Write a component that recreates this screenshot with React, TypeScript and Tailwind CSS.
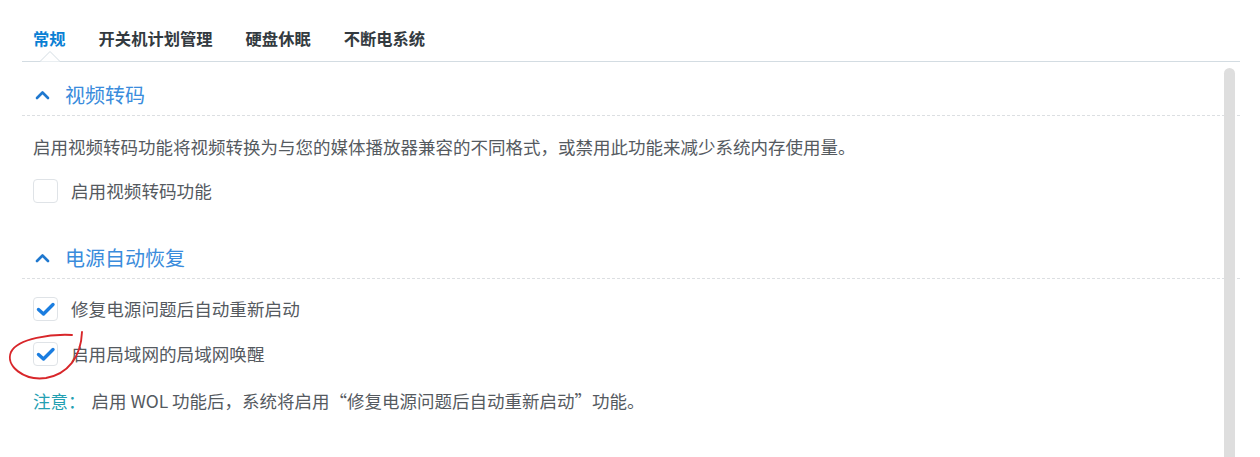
import React from "react";

const FONT = { fontFamily: '"Noto Sans CJK SC", "Noto Sans", sans-serif' };

function Chevron() {
  return (
    <svg width="15" height="10" viewBox="0 0 15 10" className="shrink-0">
      <path d="M2 8 L7.5 2.5 L13 8" fill="none" stroke="#1f78cf" strokeWidth="2.6" strokeLinecap="round" strokeLinejoin="round" />
    </svg>
  );
}

function Checkbox({ checked }: { checked?: boolean }) {
  return (
    <div className="w-[25px] h-[24px] rounded-[4px] border-[1.5px] border-[#dfe3e7] bg-white flex items-center justify-center shrink-0">
      {checked && (
        <svg width="22" height="22" viewBox="0 0 22 22">
          <path d="M3.5 11.5 L8.5 16 L18 6.5" fill="none" stroke="#1a7de0" strokeWidth="3.4" strokeLinecap="round" strokeLinejoin="round" />
        </svg>
      )}
    </div>
  );
}

function SectionHeader({ title }: { title: string }) {
  return (
    <div className="flex items-center h-[28px] box-content pb-[6px] border-b border-dashed border-[#dcdfe2]">
      <div className="w-[43px] pl-[13px] flex items-center">
        <Chevron />
      </div>
      <span className="text-[20px] leading-[28px] text-[#3a8cdc]">{title}</span>
    </div>
  );
}

function CheckRow({ label, checked }: { label: string; checked?: boolean }) {
  return (
    <div className="flex items-center h-[24px] pl-[11px]">
      <Checkbox checked={checked} />
      <span className="ml-[13px] text-[17.6px] leading-[24px] text-[#555a5f]">{label}</span>
    </div>
  );
}

export default function App() {
  const tabs = ["常规", "开关机计划管理", "硬盘休眠", "不断电系统"];
  return (
    <div className="relative w-[1260px] h-[457px] bg-white overflow-hidden" style={FONT}>
      <div className="ml-[22px] w-[1218px]">
        {/* Tabs */}
        <div className="relative h-[62px] border-b border-[#d3dce2] pl-[11px] pt-[26px] flex gap-[33px]">
          {tabs.map((t, i) => (
            <div key={t} className="relative">
              <span
                className={
                  "text-[16.3px] leading-[24px] font-bold " +
                  (i === 0 ? "text-[#0a80d4]" : "text-[#333a40]")
                }
              >
                {t}
              </span>
            </div>
          ))}
          {/* notch under active tab */}
          <svg className="absolute left-[18px] bottom-[-1px] z-10" width="20" height="11" viewBox="0 0 20 11">
            <polygon points="0,10.5 10,0.5 20,10.5" fill="#ffffff" />
            <polyline points="0,10.5 10,0.5 20,10.5" fill="none" stroke="#d3dce2" strokeWidth="1" />
          </svg>
        </div>

        {/* Section 1 */}
        <div className="mt-[19px]">
          <SectionHeader title="视频转码" />
          <p className="mt-[18px] pl-[11px] text-[17.5px] leading-[26px] text-[#555a5f] whitespace-nowrap">
            启用视频转码功能将视频转换为与您的媒体播放器兼容的不同格式，或禁用此功能来减少系统内存使用量。
          </p>
          <div className="mt-[19px]">
            <CheckRow label="启用视频转码功能" />
          </div>
        </div>

        {/* Section 2 */}
        <div className="mt-[41px]">
          <SectionHeader title="电源自动恢复" />
          <div className="mt-[18px]">
            <CheckRow label="修复电源问题后自动重新启动" checked />
          </div>
          <div className="mt-[21px]">
            <CheckRow label="启用局域网的局域网唤醒" checked />
          </div>
          <p className="mt-[22px] pl-[11px] text-[17.5px] leading-[26px] whitespace-nowrap">
            <span className="text-[#23a0b2]">注意：</span>
            <span className="ml-[6px] text-[#555a5f]">
              启用 WOL 功能后，系统将启用“修复电源问题后自动重新启动”功能。
            </span>
          </p>
        </div>
      </div>

      {/* Scrollbar */}
      <div className="absolute left-[1224px] top-[68px] bottom-0 w-[11px] rounded-t-full bg-[#dedede]" />

      {/* Hand-drawn annotation */}
      <svg className="absolute left-0 top-0 pointer-events-none" width="120" height="400" viewBox="0 0 120 400">
        <path
          d="M72 335 C 52 334, 18 338, 11 352 C 5 366, 24 381, 46 378 C 68 374, 81 357, 82 332"
          fill="none"
          stroke="#d8262a"
          strokeWidth="1.9"
          strokeLinecap="round"
        />
      </svg>
    </div>
  );
}
